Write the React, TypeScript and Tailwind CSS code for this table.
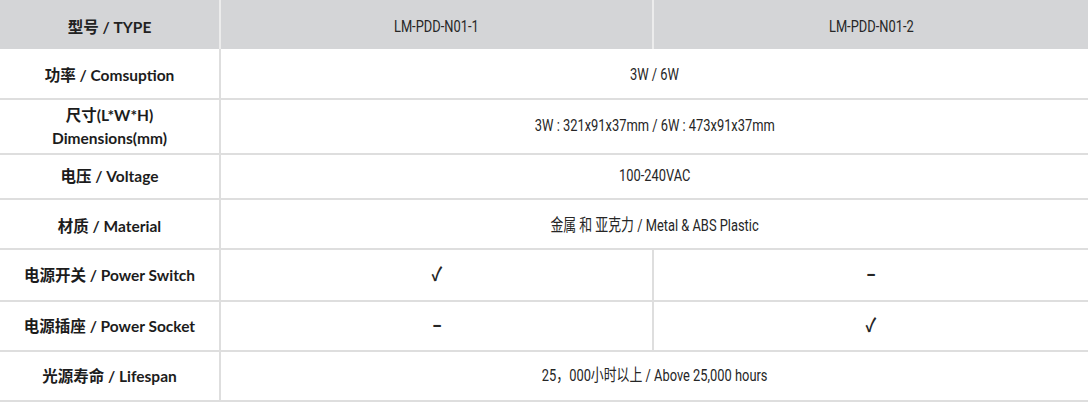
const rows = [
  { label: ['功率 / Comsuption'], h: 'h-[51px]', pad: 'pt-[4px]', span: '3W / 6W' },
  { label: ['尺寸(L*W*H)', 'Dimensions(mm)'], h: 'h-[55px]', pad: '', span: '3W : 321x91x37mm / 6W : 473x91x37mm' },
  { label: ['电压 / Voltage'], h: 'h-[45px]', pad: '', span: '100-240VAC' },
  { label: ['材质 / Material'], h: 'h-[50px]', pad: 'pt-[4px]', span: '金属 和 亚克力 / Metal & ABS Plastic' },
  { label: ['电源开关 / Power Switch'], h: 'h-[52px]', pad: 'pt-[1px]', cells: ['✓', '–'] },
  { label: ['电源插座 / Power Socket'], h: 'h-[50px]', pad: 'pt-[1px]', cells: ['–', '✓'] },
  { label: ['光源寿命 / Lifespan'], h: 'h-[50px]', pad: '', span: '25，000小时以上 / Above 25,000 hours' },
];

const labelFont = "font-['Lato','Noto_Sans_CJK_SC',sans-serif]";
const bodyFont = "font-['Roboto','Noto_Sans_CJK_SC',sans-serif]";

function Body({ children, size = 'text-[16.5px]' }: { children: React.ReactNode; size?: string }) {
  return (
    <span className={`inline-block scale-x-[0.78] whitespace-nowrap text-[#262626] ${size} ${bodyFont}`}>
      {children}
    </span>
  );
}

export default function App() {
  return (
    <div className="w-[1088px] h-[406px] bg-white">
      {/* header */}
      <div className="flex h-[49px] bg-[#d4d5d7]">
        <div className={`w-[221px] flex items-center justify-center pt-[6px] border-r-2 border-[#ececec] font-bold text-[15.5px] text-[#222] ${labelFont}`}>
          型号 / TYPE
        </div>
        <div className="w-[433px] flex items-center justify-center pt-[6px] border-r-2 border-[#ececec]">
          <Body>LM-PDD-N01-1</Body>
        </div>
        <div className="flex-1 flex items-center justify-center pt-[6px]">
          <Body>LM-PDD-N01-2</Body>
        </div>
      </div>

      {rows.map((r, i) => (
        <div key={i} className={`flex ${r.h} border-b-2 border-[#dedede]`}>
          <div
            className={`w-[221px] flex flex-col items-center justify-center ${r.pad} border-r-2 border-[#dedede] font-bold text-[15.5px] leading-[23px] text-[#1c1c1c] ${labelFont}`}
          >
            {r.label.map((l) => (
              <span key={l}>{l}</span>
            ))}
          </div>
          {r.span ? (
            <div className={`flex-1 flex items-center justify-center ${r.pad}`}>
              <Body>{r.span}</Body>
            </div>
          ) : (
            <>
              <div className={`w-[433px] flex items-center justify-center ${r.pad} border-r-2 border-[#dedede]`}>
                <Body size="text-[19px] font-bold">{r.cells![0]}</Body>
              </div>
              <div className={`flex-1 flex items-center justify-center ${r.pad}`}>
                <Body size="text-[19px] font-bold">{r.cells![1]}</Body>
              </div>
            </>
          )}
        </div>
      ))}
    </div>
  );
}
